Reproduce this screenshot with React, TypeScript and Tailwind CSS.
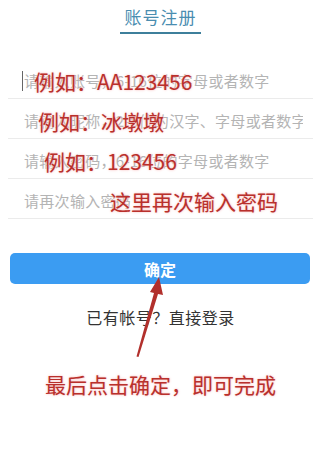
import React from "react";

type Row = {
  placeholder: string;
  hint: string; // red annotation drawn over the field
  hintLeft: string;
  cursor?: boolean;
};

const rows: Row[] = [
  { placeholder: "请输入账号，6-16位的字母或者数字", hint: "例如：AA123456", hintLeft: "left-[26px]", cursor: true },
  { placeholder: "请输入昵称，2-8位的汉字、字母或者数字", hint: "例如：冰墩墩", hintLeft: "left-[30px]" },
  { placeholder: "请输入密码，6-16位的字母或者数字", hint: "例如：123456", hintLeft: "left-[36px]" },
  { placeholder: "请再次输入密码", hint: "这里再次输入密码", hintLeft: "left-[102px]" },
];

const redText =
  "text-[#b9302c] [text-shadow:0_0_3px_#f7c4c4,0_0_1px_#f7c4c4] whitespace-nowrap";

const App = () => {
  return (
    <div className="relative w-[321px] h-[471px] bg-white overflow-hidden font-['Noto_Sans_CJK_SC',sans-serif]">
      {/* Header */}
      <div className="flex justify-center pt-[4px]">
        <div className="w-[81px] border-b-2 border-[#3e7f9b] pb-[3px] text-center text-[17px] leading-[25px] tracking-[1px] text-[#4a8db0]">
          账号注册
        </div>
      </div>

      {/* Fields */}
      <div className="mx-[8px] mt-[25px]">
        {rows.map((row) => (
          <div
            key={row.hint}
            className="relative h-[40px] flex items-center pt-[5px] pl-[16px] pr-[10px] border-b border-[#ebebeb]"
          >
            {row.cursor && <span className="absolute left-[14px] top-[12px] w-px h-[20px] bg-[#666]" />}
            <span className="text-[15px] text-[#b4b4b4] whitespace-nowrap overflow-hidden tracking-[0.3px]">
              {row.placeholder}
            </span>
            <span className={`absolute ${row.hintLeft} top-[7px] text-[21px] leading-[30px] ${redText}`}>
              {row.hint}
            </span>
          </div>
        ))}
      </div>

      {/* Submit */}
      <button className="mx-[10px] mt-[34px] w-[300px] h-[31px] rounded-[5px] bg-[#3b9cf2] text-white text-[16px] font-bold">
        确定
      </button>

      <p className="mt-[21px] text-center text-[16px] leading-[24px] text-[#333] tracking-[0.5px]">
        已有帐号？直接登录
      </p>

      <p className={`mt-[40px] text-center text-[21px] leading-[30px] ${redText}`}>
        最后点击确定，即可完成
      </p>

      {/* Annotation arrow */}
      <svg className="absolute left-0 top-0 pointer-events-none" width="321" height="471">
        <polygon points="159,277 163,295 158,294 138.5,357 136.5,356.5 154,293 150,292" fill="#b2302c" />
      </svg>
    </div>
  );
};

export default App;
